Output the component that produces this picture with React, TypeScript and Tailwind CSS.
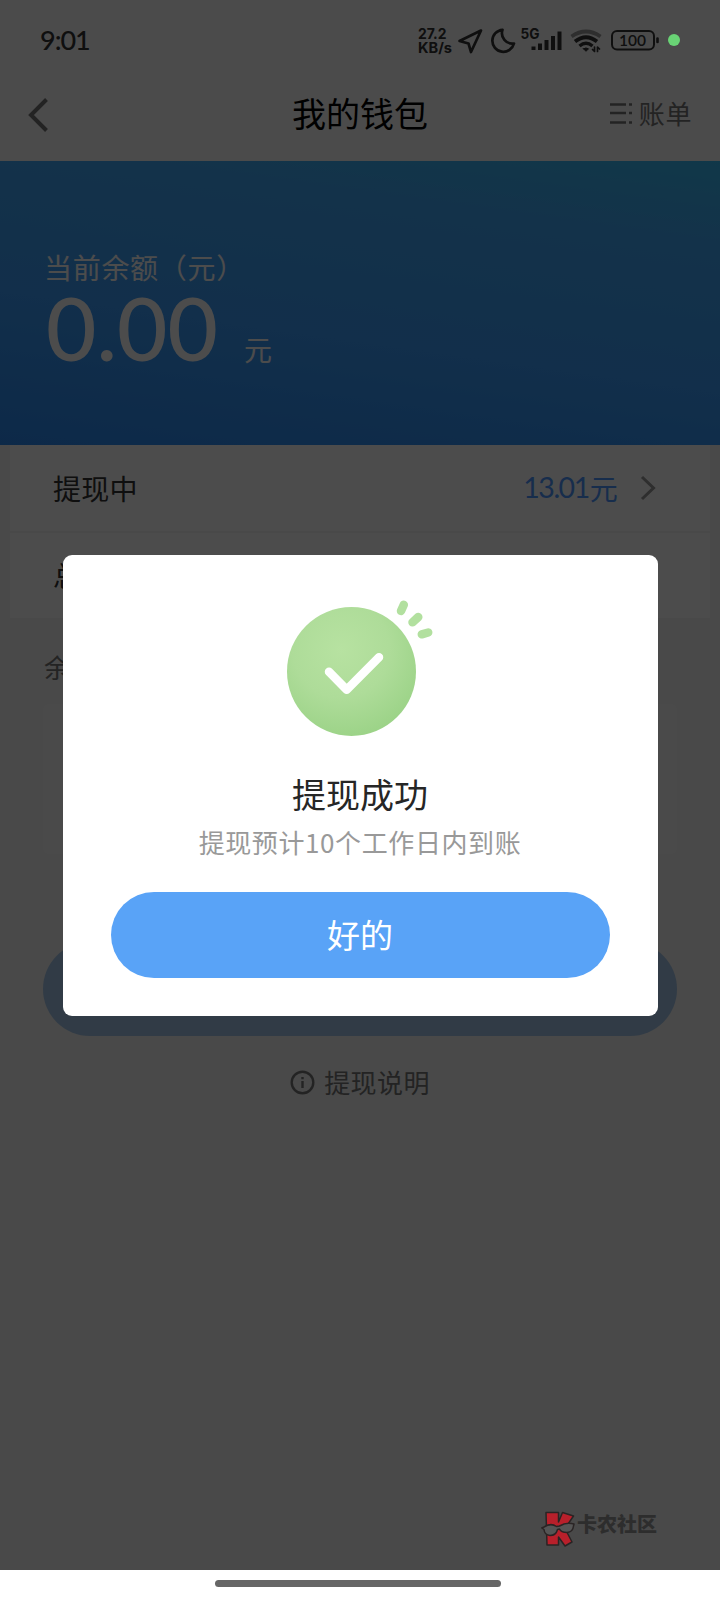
import type { ReactNode } from 'react';

function BackIcon() {
  return (
    <svg className="mt-[4px]" width="22" height="36" viewBox="0 0 22 36" fill="none" stroke="#777" strokeWidth="4">
      <path d="M18.500 2.500 L3 18 L18.500 33.500" />
    </svg>
  );
}

function BillIcon() {
  return (
    <svg width="24" height="24" viewBox="0 0 24 24" fill="none" stroke="#777" strokeWidth="2.6">
      <path d="M0 3.5H16 M0 12H16 M0 21.5H16" />
      <path d="M19 3.5H22 M19 12H22 M19 21.5H22" />
    </svg>
  );
}

function StatusIcons() {
  return (
    <svg width="264" height="36" viewBox="418 22 264 36" fill="none" stroke="#333" strokeLinecap="round" strokeLinejoin="round">
      <g fill="#333" stroke="none" fontFamily="Inter, sans-serif" fontWeight="700">
        <text x="418" y="39" fontSize="15" textLength="28.500" lengthAdjust="spacingAndGlyphs">27.2</text>
        <text x="418" y="52.500" fontSize="14" textLength="34" lengthAdjust="spacingAndGlyphs">KB/s</text>
        <text x="520.500" y="39" fontSize="14.500" textLength="19" lengthAdjust="spacingAndGlyphs">5G</text>
      </g>
      <path d="M481 30.500 L459.500 41 L468.500 43.500 L471 52 Z" strokeWidth="2.700" />
      <path d="M502.500 29.800 A11 11 0 1 0 514 43.500 A10.500 10.500 0 0 1 502.500 29.800 Z" strokeWidth="2.700" />
      <path d="M533.500 46.500V50 M540 43.500V50 M546.500 40V50 M553 36V50 M559.500 31.500V50" strokeWidth="4" strokeLinecap="butt" />
      <path d="M571.500 36.500 Q586 26.500 600.500 36.500" stroke="#999" strokeWidth="3.800" strokeLinecap="butt" />
      <path d="M575 41.500 Q586 33 597 41.500" strokeWidth="3.800" strokeLinecap="butt" />
      <path d="M579.500 46 Q586 40.500 592.500 46" strokeWidth="3.400" strokeLinecap="butt" />
      <path d="M583.500 48.800 L586 51.300 L588.500 48.800 Q586 47 583.500 48.800 Z" fill="#333" strokeWidth="1" />
      <path d="M594.500 47V51.500 L592.500 49.500 M597.500 51.500V47 L599.500 49" strokeWidth="1.700" />
      <rect x="612" y="31" width="42" height="18.500" rx="5" strokeWidth="2" />
      <path d="M657.500 38.500V42" strokeWidth="2.600" />
      <text x="619" y="46" fontSize="16" textLength="27" lengthAdjust="spacingAndGlyphs" fill="#333" stroke="none" fontFamily="Lato, sans-serif" fontWeight="600">100</text>
    </svg>
  );
}

function InfoIcon() {
  return (
    <svg width="26" height="26" viewBox="0 0 26 26" fill="none" stroke="#777" strokeWidth="2.4">
      <circle cx="12.500" cy="13.500" r="10.800" />
      <path d="M12.500 12V19 M12.500 8V10.200" />
    </svg>
  );
}

function SuccessIcon() {
  return (
    <svg width="150" height="140" viewBox="0 0 150 140">
      <defs>
        <radialGradient id="success" cx="0.42" cy="0.33" r="0.75">
          <stop offset="0" stopColor="#b7e2a1" />
          <stop offset="0.5" stopColor="#aedc99" />
          <stop offset="1" stopColor="#98d184" />
        </radialGradient>
      </defs>
      <circle cx="64.500" cy="73.500" r="64.500" fill="url(#success)" />
      <path d="M42 73.700 L59.700 91.700 L92 59.200" fill="none" stroke="#fff" strokeWidth="8.500" strokeLinecap="round" strokeLinejoin="round" />
      <g fill="none" stroke="#b2e09f" strokeWidth="8.500" strokeLinecap="round">
        <path d="M114 13 L116.800 6.800" />
        <path d="M125.500 24.300 L131.300 19" />
        <path d="M134.800 36.300 L141.200 34.500" />
      </g>
    </svg>
  );
}

function Row({ label, children }: { label: string; children?: ReactNode }) {
  return (
    <div className="flex h-[85.500px] items-center justify-between bg-white pr-[54px] pl-[43px] text-[28px] tracking-[0.3px] text-[#333]">
      <span>{label}</span>
      {children}
    </div>
  );
}

function Watermark() {
  return (
    <div className="flex items-start">
      <svg width="36" height="40" viewBox="0 0 36 40" stroke="#2a2424" strokeWidth="1.500" strokeLinejoin="round">
        <path d="M5 2.500H17.500V12L21.500 2.500L32.500 6L24 18.500L31 32L24 36L17.500 27V35H6Z" fill="#b8202b" />
        <path d="M.800 18L3 17Q10 12.500 15.500 16.500L18.500 16Q25 12 33 14L32.500 16Q32 22 26 22.500Q20 22.500 18.500 19L16.500 19.500Q15 25.500 9 25.500Q3.500 25 3 19.500Z" fill="#555" />
      </svg>
      <span className="mt-[4px] text-[20px] leading-none font-black text-[#2d2d2d]">卡农社区</span>
    </div>
  );
}

function SuccessDialog() {
  return (
    <div className="absolute inset-0 bg-black/70">
      <div className="absolute top-[34px] right-[40px] size-[12px] rounded-full bg-[#69d375]" />
      <div className="mx-auto mt-[555px] flex h-[461px] w-[595px] flex-col items-center rounded-[9px] bg-white px-12">
        <div className="mt-[43px] ml-[3px] h-[140px] w-[150px]">
          <SuccessIcon />
        </div>
        <h2 className="mt-[32px] text-[34px] leading-[48px] text-[#262626]">提现成功</h2>
        <p className="mt-[5px] text-[26px] leading-[38px] tracking-[0.6px] text-[#999]">提现预计10个工作日内到账</p>
        <button className="mt-[31px] h-[86px] w-full shrink-0 rounded-full bg-[#59a3f7] text-[33px] text-white">好的</button>
      </div>
      <div className="absolute right-[63px] bottom-[20px]">
        <Watermark />
      </div>
    </div>
  );
}

export default function App() {
  return (
    <div className="h-[1600px] w-[720px] overflow-hidden bg-white font-['Noto_Sans_CJK_SC','Inter',sans-serif]">
      <div className="relative h-[1570px] overflow-hidden bg-[#f3f3f3]">
        <div className="flex h-[80px] items-center justify-between bg-[#fbfbfb] pr-[38px] pl-[40px]">
          <span className="font-['Lato'] text-[27px] font-medium tracking-[-1px] text-[#333]">9:01</span>
          <StatusIcons />
        </div>
        <header className="grid h-[81px] grid-cols-3 items-center bg-[#fbfbfb] px-7 pb-[16px]">
          <BackIcon />
          <h1 className="text-center text-[34px] text-black">我的钱包</h1>
          <div className="flex items-center justify-end gap-[5px] text-[26px] tracking-[0.6px] text-[#777]">
            <BillIcon />
            账单
          </div>
        </header>

        <section className="flex h-[284px] flex-col bg-[linear-gradient(188deg,#38bbf5_0%,#42a8f7_22%,#3c9dfa_60%,#2b8af2_100%)] pt-[86px] pl-[44px] text-white">
          <p className="text-[28px] leading-[41px] tracking-[0.7px]">当前余额（元）</p>
          <div className="flex items-baseline">
            <span className="ml-[2px] font-['Lato'] text-[87px] leading-[80px] font-medium">0.00</span>
            <span className="ml-[26px] text-[28px] leading-none">元</span>
          </div>
        </section>

        <section className="mx-[10px] flex flex-col gap-[2px]">
          <Row label="提现中">
            <span className="flex items-center text-[#4f98ff]">
              <span className="font-['Lato'] text-[28.500px] tracking-[-1.5px]">13.01</span>
              <span className="ml-[1px]">元</span>
              <svg className="ml-[22px]" width="16" height="26" viewBox="0 0 16 26" fill="none" stroke="#999" strokeWidth="3">
                <path d="M2 2L13.500 13L2 24" />
              </svg>
            </span>
          </Row>
          <Row label="总" />
        </section>

        <p className="mt-[29px] ml-[44px] text-[26px] leading-[40px] text-[#777]">余</p>
        <div className="mx-[43px] mt-[17px] h-[150px] rounded-md bg-[#f9f9f9]" />
        <div className="mx-[43px] mt-[88px] h-[94px] rounded-full bg-[#a3c6ea]" />
        <div className="mt-[26px] flex items-center justify-center gap-2 text-[26px] leading-[40px] tracking-[0.4px] text-[#777]">
          <InfoIcon />
          提现说明
        </div>
        <SuccessDialog />
      </div>
      <div className="flex h-[30px] pt-[10px] pl-[215px]">
        <div className="h-[7px] w-[286px] rounded-full bg-[#666]" />
      </div>
    </div>
  );
}
